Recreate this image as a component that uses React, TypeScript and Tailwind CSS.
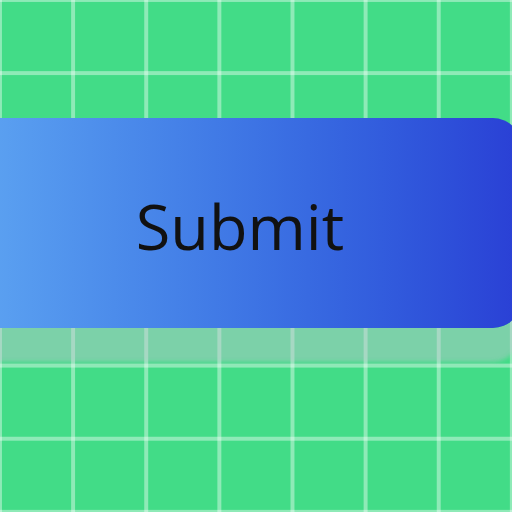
export default function App() {
  return (
    <div className="relative h-[512px] w-[512px] overflow-hidden bg-[#42dc87] bg-[linear-gradient(to_right,rgba(255,255,255,0.4)_4px,transparent_4px),linear-gradient(to_bottom,rgba(255,255,255,0.4)_4px,transparent_4px)] bg-[length:73.14px_73.14px] bg-[position:-2px_-2px] pt-[118px]">
      <button
        type="button"
        className="-ml-[41px] flex h-[210px] w-[562px] items-center justify-center rounded-[28px] bg-gradient-to-r from-[#5fa6f2] to-[#2a3fd5] shadow-[0_36px_4px_-2px_rgba(195,195,210,0.45)]"
      >
        <span className="font-['Open_Sans','Noto_Sans',sans-serif] text-[63px] leading-none text-[#111] pt-[4px]">
          Submit
        </span>
      </button>
    </div>
  );
}
